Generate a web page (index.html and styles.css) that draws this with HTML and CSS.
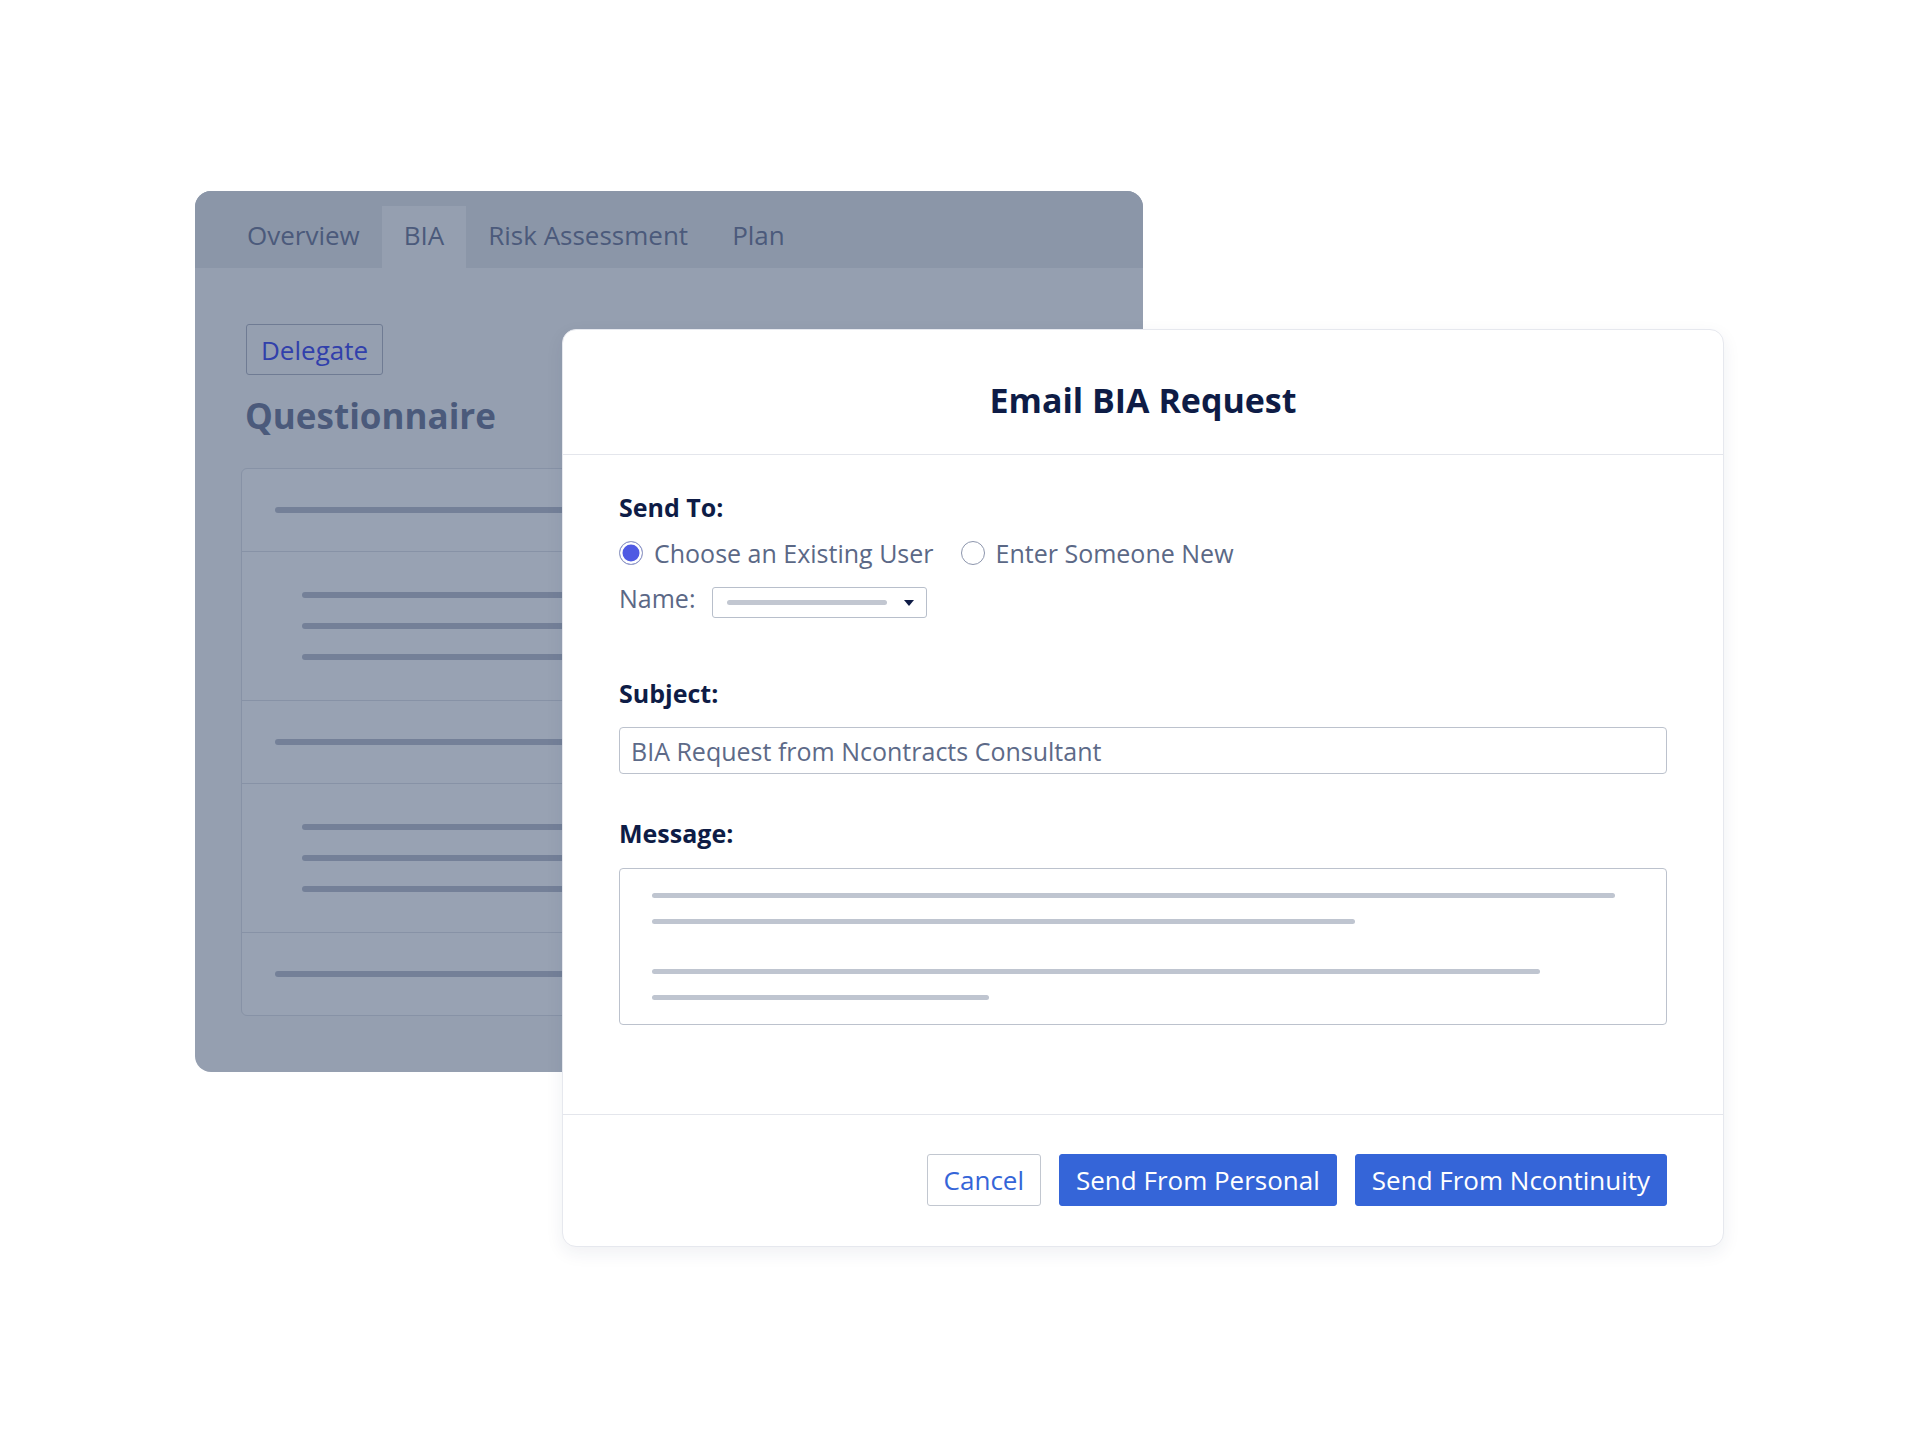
FILE: index.html
```html
<!DOCTYPE html>
<html lang="en">
<head>
  <meta charset="UTF-8" />
  <meta name="viewport" content="width=device-width, initial-scale=1.0"/>
  <title>Email BIA Request | Ncontinuity</title>
  <link rel="stylesheet" href="styles.css">
</head>
<body>

  <div class="stage">
    <div class="panel">
      <div class="tabs">
        <span class="tab">Overview</span>
        <span class="tab active">BIA</span>
        <span class="tab">Risk Assessment</span>
        <span class="tab">Plan</span>
      </div>

      <div class="panel-body">
        <button class="delegate">Delegate</button>
        <h2 class="section-title">Questionnaire</h2>

        <div class="question-card">
          <div class="q-row short"><span class="bar"></span></div>
          <div class="q-row tall">
            <span class="bar"></span>
            <span class="bar"></span>
            <span class="bar"></span>
          </div>
          <div class="q-row short"><span class="bar"></span></div>
          <div class="q-row tall">
            <span class="bar"></span>
            <span class="bar"></span>
            <span class="bar"></span>
          </div>
          <div class="q-row short"><span class="bar"></span></div>
        </div>
      </div>
    </div>

    <div class="modal">
      <div class="modal-header">
        <h1>Email BIA Request</h1>
      </div>

      <div class="modal-body">
        <div class="field-label">Send To:</div>

        <div class="radio-row">
          <label class="radio"><span class="dot checked"></span>Choose an Existing User</label>
          <label class="radio"><span class="dot"></span>Enter Someone New</label>
        </div>

        <div class="name-row">
          <span class="name-label">Name:</span>
          <div class="select">
            <span class="select-line"></span>
            <svg class="caret" width="12" height="8" viewBox="0 0 12 8"><path d="M1 1h10L6 7z" fill="#0f1c46"/></svg>
          </div>
        </div>

        <div class="field-label subject">Subject:</div>
        <div class="text-input">BIA Request from Ncontracts Consultant</div>

        <div class="field-label message">Message:</div>
        <div class="textarea">
          <span class="line" style="width: 963px"></span>
          <span class="line" style="width: 703px"></span>
          <span class="line gap" style="width: 888px"></span>
          <span class="line" style="width: 337px"></span>
        </div>
      </div>

      <div class="modal-footer">
        <button class="btn btn-outline">Cancel</button>
        <button class="btn btn-primary">Send From Personal</button>
        <button class="btn btn-primary">Send From Ncontinuity</button>
      </div>
    </div>
  </div>

</body>
</html>
```

FILE: styles.css
```css
body {
  margin: 0;
  background: #ffffff;
  font-family: 'Open Sans', 'Noto Sans', sans-serif;
}
.stage {
  display: grid;
  width: 1529px;
  margin: 191px 0 0 195px;
  padding-bottom: 190px;
}
.panel,
.modal {
  grid-area: 1 / 1;
  align-self: start;
  justify-self: start;
}

/* background page (dimmed) */
.panel {
  width: 948px;
  background: #959fb0;
  border-radius: 16px;
  overflow: hidden;
}
.tabs {
  display: flex;
  height: 77px;
  box-sizing: border-box;
  padding: 15px 30px 0;
  background: #8b96a8;
}
.tab {
  padding: 0 22px;
  height: 62px;
  line-height: 58px;
  font-size: 26px;
  color: #4b5a7b;
}
.tab.active {
  background: #959fb0;
}
.panel-body {
  padding: 56px 46px 56px;
}
.delegate {
  display: block;
  margin-left: 5px;
  height: 51px;
  padding: 0 14px;
  background: transparent;
  border: 1px solid #6f7b93;
  border-radius: 3px;
  font-family: inherit;
  font-size: 26px;
  color: #3140ab;
}
.section-title {
  margin: 18px 0 29px 4px;
  font-size: 35px;
  line-height: 46px;
  font-weight: 700;
  color: #4b5a7b;
}
.question-card {
  background: #98a2b3;
  border: 1px solid #8792a6;
  border-radius: 6px;
}
.q-row {
  display: flex;
  flex-direction: column;
  gap: 25px;
  border-top: 1px solid #8792a6;
}
.q-row:first-child {
  border-top: none;
}
.q-row.short {
  padding: 38px 0 38px 33px;
}
.q-row.tall {
  padding: 40px 0 40px 60px;
}
.bar {
  display: block;
  width: 560px;
  height: 6px;
  border-radius: 3px;
  background: #748098;
}

/* modal */
.modal {
  z-index: 1;
  margin: 138px 0 0 367px;
  width: 1162px;
  box-sizing: border-box;
  background: #ffffff;
  border: 1px solid #e6e8ee;
  border-radius: 14px;
  box-shadow: 0 6px 18px rgba(30, 40, 80, 0.07);
}
.modal-header {
  padding: 48px 0 31px;
  border-bottom: 1px solid #e4e6ec;
  text-align: center;
}
.modal-header h1 {
  margin: 0;
  font-size: 34px;
  line-height: 45px;
  font-weight: 700;
  color: #0e1c46;
}
.modal-body {
  padding: 34px 56px 89px;
  font-size: 25px;
  line-height: 36px;
  color: #5b6886;
}
.field-label {
  font-weight: 700;
  color: #0e1c46;
}
.field-label.subject {
  margin-top: 57px;
}
.field-label.message {
  margin-top: 41px;
}
.radio-row {
  display: flex;
  gap: 27px;
  margin-top: 10px;
}
.radio {
  display: flex;
  align-items: center;
  gap: 11px;
}
.dot {
  width: 24px;
  height: 24px;
  box-sizing: border-box;
  border: 1.5px solid #8d96ad;
  border-radius: 50%;
  background: #ffffff;
}
.dot.checked {
  border-color: #9aa2c0;
  background: #4f5ae3;
  box-shadow: inset 0 0 0 2.5px #ffffff;
}
.name-row {
  display: flex;
  align-items: flex-start;
  gap: 17px;
  margin-top: 9px;
}
.select {
  display: flex;
  align-items: center;
  justify-content: space-between;
  margin-top: 7px;
  width: 215px;
  height: 31px;
  box-sizing: border-box;
  padding: 0 11px 0 14px;
  border: 1px solid #b8bfcb;
  border-radius: 3px;
}
.select-line {
  width: 160px;
  height: 5px;
  border-radius: 3px;
  background: #c2c7d1;
}
.text-input {
  display: flex;
  align-items: center;
  margin-top: 16px;
  height: 47px;
  box-sizing: border-box;
  padding: 0 11px;
  border: 1px solid #bcc2cd;
  border-radius: 4px;
  color: #5d6a88;
}
.textarea {
  display: flex;
  flex-direction: column;
  gap: 21px;
  margin-top: 17px;
  height: 157px;
  box-sizing: border-box;
  padding: 24px 32px;
  border: 1px solid #bcc2cd;
  border-radius: 4px;
}
.line {
  display: block;
  height: 5px;
  border-radius: 3px;
  background: #bfc5d0;
}
.line.gap {
  margin-top: 24px;
}
.modal-footer {
  display: flex;
  justify-content: flex-end;
  gap: 18px;
  padding: 39px 56px 40px;
  border-top: 1px solid #e4e6ec;
}
.btn {
  height: 52px;
  padding: 0 16px;
  border-radius: 3px;
  font-family: inherit;
  font-size: 26px;
  cursor: pointer;
}
.btn-outline {
  background: #ffffff;
  border: 1px solid #c2c7d0;
  color: #3565d8;
}
.btn-primary {
  background: #3565d8;
  border: 1px solid #3565d8;
  color: #ffffff;
}
```
